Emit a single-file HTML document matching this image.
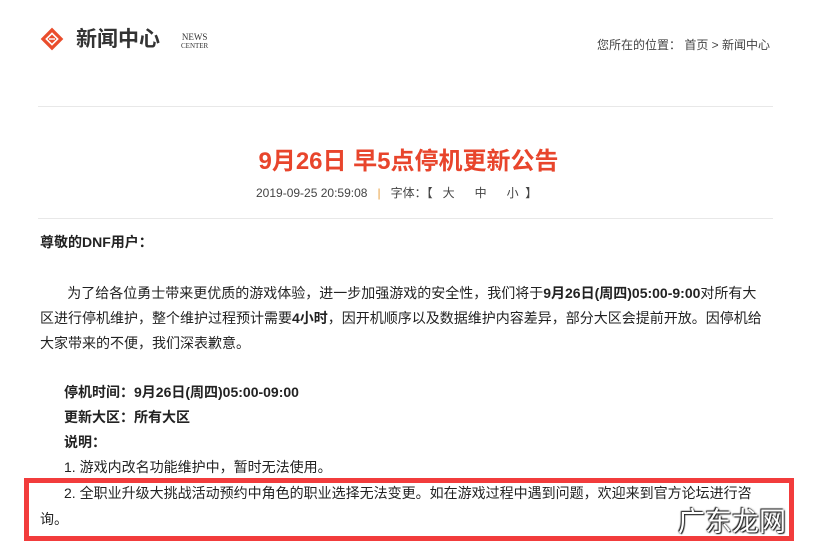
<!DOCTYPE html>
<html><head><meta charset="utf-8"><style>
*{margin:0;padding:0;box-sizing:border-box}
body{width:817px;height:559px;background:#fff;font-family:"Liberation Sans","Noto Sans CJK SC",sans-serif;color:#222;position:relative;overflow:hidden}
.abs{position:absolute;white-space:nowrap}
.t{font-size:14px;line-height:25px}
b{font-weight:bold}
</style></head><body>
<svg class="abs" style="left:40px;top:27px" width="24" height="24" viewBox="0 0 24 24">
<rect x="4" y="4" width="16" height="16" transform="rotate(45 12 12)" fill="#ea4d2c"/>
<rect x="8" y="8" width="8" height="8" transform="rotate(45 12 12)" fill="none" stroke="#fff" stroke-width="1.6"/>
<line x1="9" y1="12" x2="15" y2="12" stroke="#fff" stroke-width="1.4"/>
</svg>
<div class="abs" style="left:76px;top:26px;font-size:21px;font-weight:bold;color:#333;line-height:28px">新闻中心</div>
<div class="abs" style="left:181px;top:33px;font-family:'Liberation Serif',serif;font-size:9px;line-height:8px;color:#333;text-align:center">NEWS<br><span style="font-size:7px">CENTER</span></div>
<div class="abs" style="left:597px;top:37px;font-size:12px;color:#444;line-height:16px">您所在的位置：&nbsp;首页 &gt; 新闻中心</div>
<div class="abs" style="left:38px;top:106px;width:735px;height:1px;background:#e8e8e8"></div>
<div class="abs" style="left:0;width:817px;top:145px;text-align:center;font-size:24px;font-weight:bold;color:#e8452c;line-height:34px">9月26日 早5点停机更新公告</div>
<div class="abs" style="left:256px;top:185px;font-size:12px;color:#444;line-height:16px">2019-09-25 20:59:08 &nbsp;&nbsp;<span style="color:#e8a040">|</span>&nbsp;&nbsp; 字体：【&nbsp;&nbsp; 大 &nbsp;&nbsp;&nbsp;&nbsp; 中 &nbsp;&nbsp;&nbsp;&nbsp; 小 &nbsp;】</div>
<div class="abs" style="left:38px;top:218px;width:735px;height:1px;background:#e8e8e8"></div>
<div class="abs t" style="left:40px;top:230px"><b>尊敬的DNF用户：</b></div>
<div class="abs t" style="left:40px;top:281px">&nbsp;&nbsp;&nbsp;&nbsp;&nbsp;&nbsp;&nbsp;为了给各位勇士带来更优质的游戏体验，进一步加强游戏的安全性，我们将于<b>9月26日(周四)05:00-9:00</b>对所有大<br>区进行停机维护，整个维护过程预计需要<b>4小时</b>，因开机顺序以及数据维护内容差异，部分大区会提前开放。因停机给<br>大家带来的不便，我们深表歉意。</div>
<div class="abs t" style="left:64px;top:380px"><b>停机时间：9月26日(周四)05:00-09:00</b><br><b>更新大区：所有大区</b><br><b>说明：</b><br>1. 游戏内改名功能维护中，暂时无法使用。</div>
<div class="abs" style="left:24px;top:478px;width:770px;height:63px;border:5px solid #f23c3c"></div>
<div class="abs t" style="left:64px;top:481px">2. 全职业升级大挑战活动预约中角色的职业选择无法变更。如在游戏过程中遇到问题，欢迎来到官方论坛进行咨</div>
<div class="abs t" style="left:40px;top:507px">询。</div>
<div class="abs" style="left:678px;top:506px;font-size:27px;color:#fff;line-height:32px;text-shadow:0 0 2px #222,1px 1px 1px #222,-1px -1px 1px #222">广东龙网</div>
</body></html>
